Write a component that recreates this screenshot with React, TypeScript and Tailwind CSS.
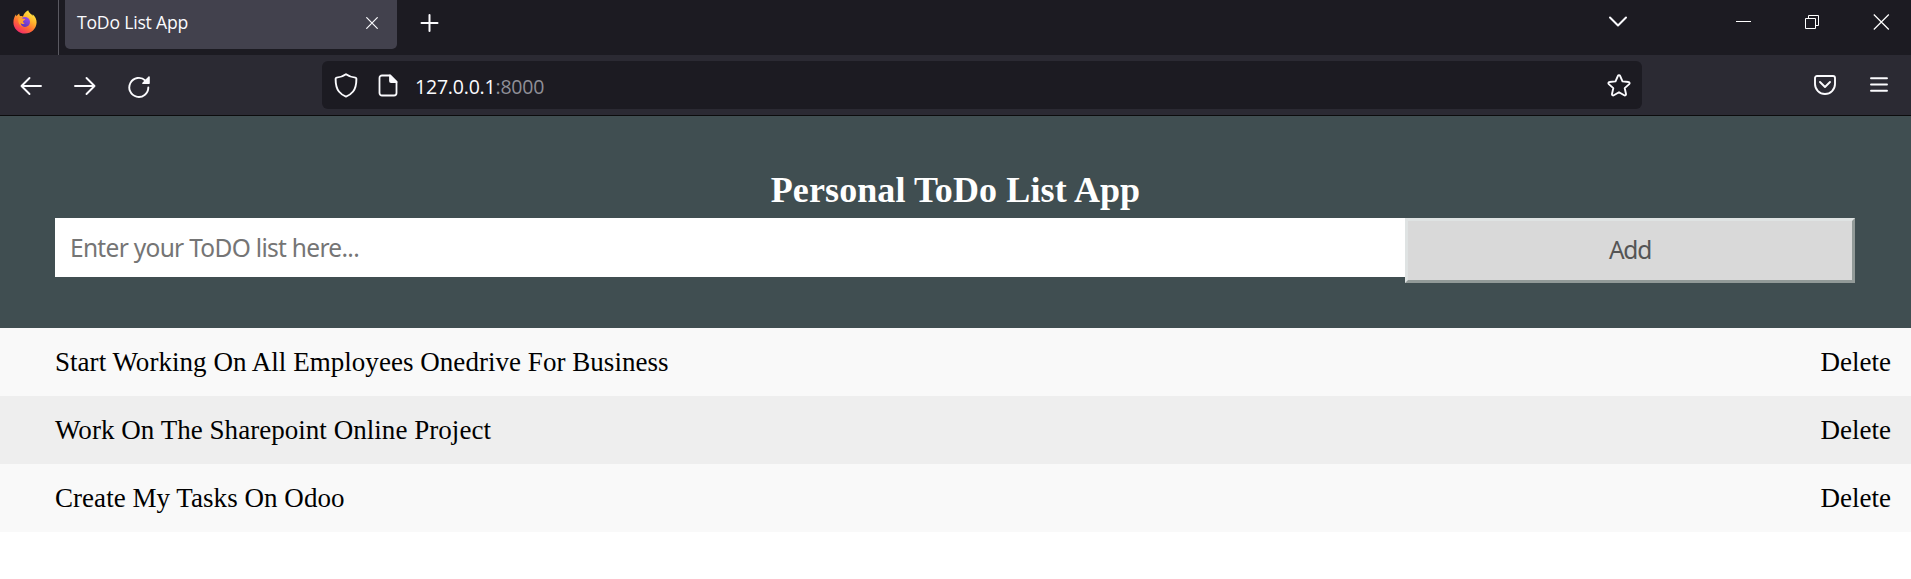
import React from "react";

const tasks = [
  "Start Working On All Employees Onedrive For Business",
  "Work On The Sharepoint Online Project",
  "Create My Tasks On Odoo",
];

function FirefoxLogo() {
  return (
    <svg width="24" height="24" viewBox="0 0 24 24" className="block">
      <defs>
        <linearGradient id="fire" x1="0.85" y1="0.05" x2="0.25" y2="1">
          <stop offset="0" stopColor="#fff04a" />
          <stop offset="0.35" stopColor="#ffb52c" />
          <stop offset="0.65" stopColor="#ff6a34" />
          <stop offset="1" stopColor="#f0246f" />
        </linearGradient>
        <linearGradient id="globe" x1="0.8" y1="0" x2="0.3" y2="1">
          <stop offset="0" stopColor="#9a4df0" />
          <stop offset="1" stopColor="#5b35b8" />
        </linearGradient>
      </defs>
      <path fill="url(#fire)" d="M15.2.2c.4 1.8 1.7 2.8 3.1 4.1.5.4.9.9 1.2 1.4.2-.6.2-1 .1-1.5C22.2 6.2 23.7 9.2 23.6 12.6 23.3 19 18.3 23.6 12 23.6 5.6 23.6.4 18.7.4 12.5.4 9.2 1.4 6.5 3.1 4.3c0 .8.1 1.4.4 2C4.2 5.1 5.1 4.1 6.2 3.4c0 1 .3 1.9.9 2.6 1 0 2 .1 2.9.5C10.5 4.1 12.5 1.6 15.2.2z" />
      <circle cx="12" cy="12" r="5" fill="url(#globe)" />
      <path fill="#ffa02f" d="M5.5 8.3c1.7-.8 3.3-.4 4.4.4.8.1 1.9.1 2.4.4-.2 1.200-1.900 1.500-2.300 2.200-.1.900.6 1.800 1.800 1.900-1.300 1.300-3.400.7-4.100-.5-.3 1.500.6 3 2.100 3.700-3 0-5.400-4.500-4.300-8.100z" />
    </svg>
  );
}

function TabStrip() {
  return (
    <div className="flex h-[55px] bg-[#1c1b22]">
      <div className="flex w-[58px] pl-[13px] pt-[10px]">
        <FirefoxLogo />
      </div>
      <div className="w-px bg-[#5a5961]" />
      <div className="ml-[6px] flex h-[49px] w-[332px] items-center rounded-b-[5px] bg-[#42414d] pb-[4px] pl-[12px] pr-[19px]">
        <span className="grow whitespace-nowrap font-['Open_Sans',sans-serif] text-[17.6px] tracking-[-0.2px] text-[#fbfbfe]">ToDo List App</span>
        <svg width="12" height="12" viewBox="0 0 12 12" stroke="#fbfbfe" strokeWidth="1.2" strokeLinecap="round">
          <path d="M.7.7l10.6 10.6M11.3.7L.7 11.3" />
        </svg>
      </div>
      <svg className="ml-[23px] mt-[14px]" width="19" height="18" viewBox="0 0 19 18" stroke="#fbfbfe" strokeWidth="2" strokeLinecap="round">
        <path d="M1.5 9h16M9.5 1v16" />
      </svg>
      <div className="grow" />
      <svg className="mt-[16px]" width="20" height="12" viewBox="0 0 20 12" fill="none" stroke="#fbfbfe" strokeWidth="2" strokeLinecap="round" strokeLinejoin="round">
        <path d="M2 1.500l8 8 8-8" />
      </svg>
      <svg className="ml-[108px] mt-[21px]" width="15" height="1" viewBox="0 0 15 1">
        <path fill="#fff" d="M0 0h15v1H0z" />
      </svg>
      <svg className="ml-[54px] mt-[15px]" width="14" height="14" viewBox="0 0 14 14" fill="none" stroke="#fff">
        <path d="M.5 3.5h10v10H.5zM3.5 3.5v-3h10v10h-3" />
      </svg>
      <svg className="ml-[54px] mr-[21px] mt-[14px]" width="17" height="16" viewBox="0 0 17 16" fill="none" stroke="#fff" strokeWidth="1.2">
        <path d="M.8.5l15 15M15.8.5l-15 15" />
      </svg>
    </div>
  );
}

function Toolbar() {
  return (
    <div className="flex h-[61px] border-b border-[#0c0c0d] bg-[#2b2a33] text-[#fbfbfe]">
      <svg className="ml-[20px] mt-[21px]" width="22" height="20" viewBox="0 0 22 20" fill="none" stroke="currentColor" strokeWidth="1.9" strokeLinecap="round" strokeLinejoin="round">
        <path d="M21 10H1.500M9.500 2l-8 8 8 8" />
      </svg>
      <svg className="ml-[32px] mt-[21px]" width="22" height="20" viewBox="0 0 22 20" fill="none" stroke="currentColor" strokeWidth="1.9" strokeLinecap="round" strokeLinejoin="round">
        <path d="M1 10h19.500M12.500 2l8 8-8 8" />
      </svg>
      <svg className="ml-[32px] mt-[20px]" width="23" height="24" viewBox="0 0 23 24" fill="none" stroke="currentColor" strokeWidth="1.9" strokeLinecap="round" strokeLinejoin="round">
        <path d="M20.300 12.400a9.500 9.500 0 1 1-3-6.900" />
        <path fill="currentColor" stroke="none" d="M21.800 2.100v6.100a.8.800 0 0 1-.8.800h-6.100c-.7 0-1-.8-.5-1.300l6.100-6.100c.500-.500 1.300-.2 1.300.5z" />
      </svg>
      <div className="ml-[171px] mt-[6px] flex h-[48px] w-[1320px] rounded-[6px] bg-[#1c1b22]">
        <svg className="ml-[12px] mt-[12px]" width="24" height="25" viewBox="0 0 24 25" fill="none" stroke="currentColor" strokeWidth="1.9" strokeLinejoin="round">
          <path d="M12 1.200C9.300 3.300 5.800 4.200 2.600 4.600 1.900 4.700 1.600 5.100 1.600 5.800c0 5.800 1 9.900 3.300 12.700C6.600 20.600 9 22.500 12 23.600c3-1.100 5.400-3 7.100-5.100 2.300-2.800 3.300-6.900 3.300-12.700 0-.7-.3-1.100-1-1.200C18.200 4.200 14.700 3.300 12 1.200z" />
        </svg>
        <svg className="ml-[20px] mt-[13px]" width="20" height="23" viewBox="0 0 20 23" fill="none" stroke="currentColor" strokeWidth="1.8" strokeLinejoin="round">
          <path d="M12 1.500H4A2.500 2.500 0 0 0 1.500 4v15A2.500 2.500 0 0 0 4 21.500h12a2.500 2.500 0 0 0 2.500-2.500V8z" />
          <path fill="currentColor" d="M12 1.500V7a1 1 0 0 0 1 1h5.500z" />
        </svg>
        <span className="ml-[17px] grow whitespace-nowrap pt-[12px] font-['Open_Sans',sans-serif] text-[19.5px] leading-[28px] tracking-[-0.2px]">
          127.0.0.1<span className="text-[#8f8f98]">:8000</span>
        </span>
        <svg className="mr-[11px] mt-[13px]" width="24" height="24" viewBox="0 0 24 24" fill="none" stroke="currentColor" strokeWidth="1.9" strokeLinejoin="round">
          <path d="M10.900 1.900a1.200 1.200 0 0 1 2.200 0l2.400 5.500 6 .6a1.200 1.200 0 0 1 .7 2.100l-4.500 4 1.300 5.900a1.200 1.200 0 0 1-1.800 1.300L12 18.200l-5.200 3.100A1.200 1.200 0 0 1 5 20l1.300-5.900-4.500-4A1.200 1.200 0 0 1 2.500 8l6-.6z" />
        </svg>
      </div>
      <div className="grow" />
      <svg className="mt-[20px]" width="22" height="20" viewBox="0 0 22 20" fill="none" stroke="currentColor" strokeWidth="1.9" strokeLinecap="round" strokeLinejoin="round">
        <path d="M3 1h16a2 2 0 0 1 2 2v6a10 10 0 0 1-20 0V3a2 2 0 0 1 2-2z" />
        <path d="M6 7l5 5 5-5" />
      </svg>
      <svg className="ml-[34px] mr-[23px] mt-[22px]" width="18" height="15" viewBox="0 0 18 15" stroke="currentColor" strokeWidth="1.9" strokeLinecap="round">
        <path d="M1 1.200h16M1 7.500h16M1 13.800h16" />
      </svg>
    </div>
  );
}

export default function App() {
  return (
    <div className="h-[579px] w-[1911px] overflow-hidden bg-white">
      <TabStrip />
      <Toolbar />
      <header className="h-[212px] bg-[#404e51] px-[55px] pt-[53px]">
        <h1 className="text-center font-['Liberation_Serif',serif] text-[36px] font-bold leading-[42px] tracking-[0.11px] text-white">
          Personal ToDo List App
        </h1>
        <div className="mt-[7px] flex items-start">
          <input
            className="h-[59px] w-[1350px] shrink-0 bg-white px-[15px] font-['Noto_Sans',sans-serif] text-[24.5px] tracking-[-0.7px] outline-none placeholder:text-[#757575]"
            placeholder="Enter your ToDO list here..."
          />
          <button className="h-[65px] w-[450px] shrink-0 border-[3px] border-b-[#929a98] border-l-[#dfe3e3] border-r-[#929a98] border-t-[#dfe3e3] bg-[#d9d9d9] font-['Noto_Sans',sans-serif] text-[24.5px] tracking-[-1.2px] text-[#555555]">
            Add
          </button>
        </div>
      </header>
      <ul className="font-['Liberation_Serif',serif] text-[27px] leading-[31px] text-black">
        {tasks.map((task) => (
          <li key={task} className="flex h-[68px] items-center justify-between bg-[#f9f9f9] pl-[55px] pr-[20px] even:bg-[#eeeeee]">
            <span className="tracking-[0.04px]">{task}</span>
            <span>Delete</span>
          </li>
        ))}
      </ul>
    </div>
  );
}
